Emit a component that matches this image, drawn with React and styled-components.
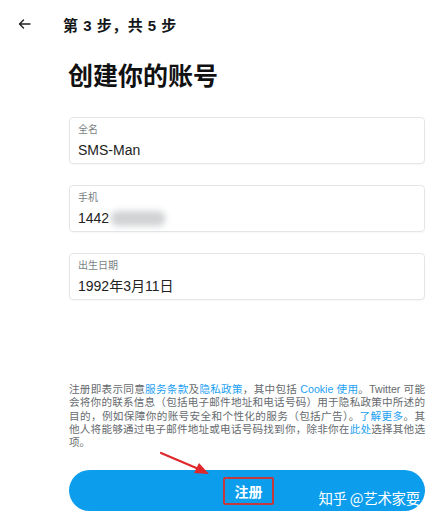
import React from "react";
import styled, { createGlobalStyle } from "styled-components";

const GlobalStyle = createGlobalStyle`
  body {
    margin: 0;
    background: #fff;
    font-family: "Liberation Sans", "Noto Sans CJK SC", sans-serif;
    color: #14171a;
  }
`;

const Page = styled.div`
  position: relative;
  width: 432px;
  height: 517px;
  overflow: hidden;
  background: #fff;
`;

const Header = styled.div`
  display: flex;
  align-items: center;
  height: 48px;
  padding-left: 18px;
  box-sizing: border-box;
`;

const Back = styled.span`
  display: flex;
  width: 45px;
  color: #222;
`;

const Step = styled.h2`
  margin: 0;
  font-size: 15px;
  font-weight: 700;
  letter-spacing: 0.5px;
`;

const Main = styled.div`
  padding: 13px 7px 0 69px;
`;

const Title = styled.h1`
  margin: 0 0 26px -1px;
  font-size: 25px;
  line-height: 30px;
  font-weight: 700;
  color: #111;
`;

const Fields = styled.div`
  display: flex;
  flex-direction: column;
  gap: 21px;
`;

const Field = styled.div`
  height: 47px;
  box-sizing: border-box;
  border: 1px solid #e3e6e8;
  border-radius: 4px;
  box-shadow: 0 1px 2px rgba(0, 0, 0, 0.04);
  padding: 6px 0 0 8px;
`;

const Label = styled.div`
  font-size: 10px;
  line-height: 12px;
  color: #7a7f84;
`;

const Value = styled.div`
  margin-top: 4px;
  font-size: 14px;
  line-height: 20px;
  color: #222;
  display: flex;
  align-items: center;
`;

const Blur = styled.span`
  display: inline-block;
  width: 54px;
  height: 15px;
  margin-left: 2px;
  background: #d0d2d4;
  border-radius: 6px;
  filter: blur(3px);
`;

const Legal = styled.div`
  margin-top: 83px;
  font-size: 10.6px;
  line-height: 13.3px;
  color: #666a6e;
`;

const Line = styled.span`
  display: block;
  white-space: nowrap;
  text-align: justify;
  text-align-last: ${(p) => (p.$last ? "left" : "justify")};
`;

const A = styled.span`
  color: #1da1f2;
`;

const Button = styled.div`
  margin-top: 21px;
  height: 41px;
  border-radius: 21px;
  background: #0c9ded;
  display: flex;
  align-items: center;
  justify-content: center;
`;

const ButtonText = styled.span`
  box-sizing: border-box;
  width: 51px;
  height: 28px;
  margin-left: 3px;
  border: 2px solid #c5383c;
  border-radius: 2px;
  display: flex;
  align-items: center;
  justify-content: center;
  color: #fff;
  font-size: 14px;
  font-weight: 700;
`;

const Watermark = styled.div`
  position: absolute;
  right: 12px;
  top: 488px;
  color: #fff;
  font-family: "Noto Sans CJK SC", sans-serif;
  font-size: 14.5px;
  line-height: 20px;
  letter-spacing: -0.3px;
`;

const Arrow = styled.svg`
  position: absolute;
  left: 158px;
  top: 449px;
`;

export default function App() {
  return (
    <Page>
      <GlobalStyle />
      <Header>
        <Back>
          <svg width="13" height="10" viewBox="0 0 13 10" fill="none">
            <path d="M12 5H1.5M5.5 1L1.5 5l4 4" stroke="#222" strokeWidth="1.4" strokeLinecap="round" strokeLinejoin="round" />
          </svg>
        </Back>
        <Step>第 3 步，共 5 步</Step>
      </Header>
      <Main>
        <Title>创建你的账号</Title>
        <Fields>
          <Field>
            <Label>全名</Label>
            <Value>SMS-Man</Value>
          </Field>
          <Field>
            <Label>手机</Label>
            <Value>
              1442
              <Blur />
            </Value>
          </Field>
          <Field>
            <Label>出生日期</Label>
            <Value>1992年3月11日</Value>
          </Field>
        </Fields>
        <Legal>
          <Line>
            注册即表示同意<A>服务条款</A>及<A>隐私政策</A>，其中包括 <A>Cookie 使用</A>。Twitter 可能
          </Line>
          <Line>会将你的联系信息（包括电子邮件地址和电话号码）用于隐私政策中所述的</Line>
          <Line>
            目的，例如保障你的账号安全和个性化的服务（包括广告）。<A>了解更多</A>。其
          </Line>
          <Line>
            他人将能够通过电子邮件地址或电话号码找到你，除非你在<A>此处</A>选择其他选
          </Line>
          <Line $last>项。</Line>
        </Legal>
        <Button>
          <ButtonText>注册</ButtonText>
        </Button>
      </Main>
      <Arrow width="60" height="32" viewBox="0 0 60 32">
        <line x1="3" y1="4" x2="43" y2="21" stroke="#e0282c" strokeWidth="2.2" strokeLinecap="round" />
        <polygon points="51,25 36,24 41,14" fill="#e0282c" />
      </Arrow>
      <Watermark>知乎 @艺术家耍</Watermark>
    </Page>
  );
}
